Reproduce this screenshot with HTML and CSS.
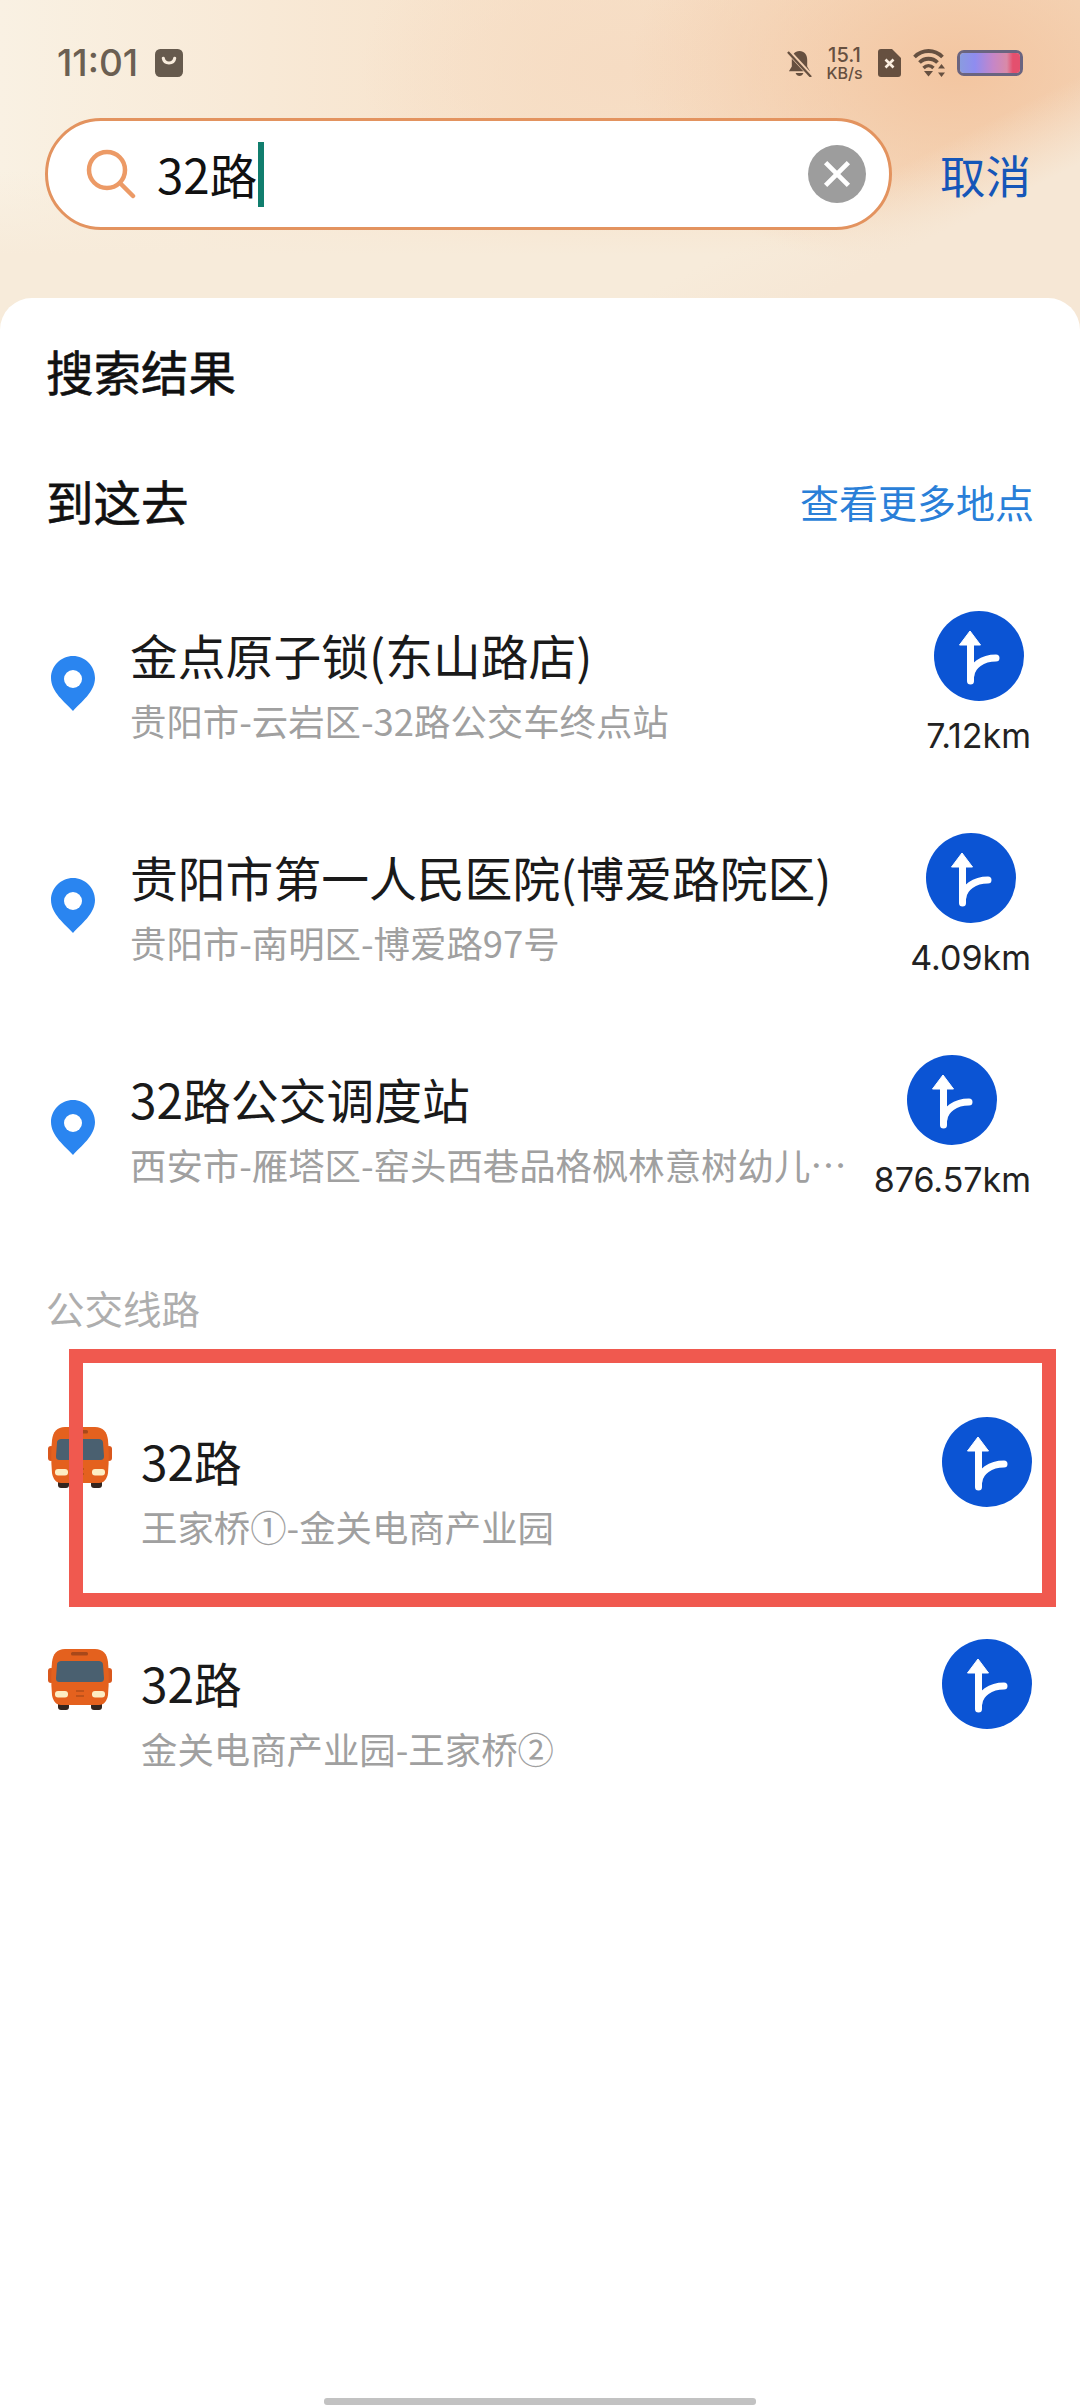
FILE: index.html
```html
<!DOCTYPE html>
<html>

<head>
    <title>搜索结果</title>
    <meta name='viewport' content='width=device-width'>
    <link rel="stylesheet" href="styles.css">
</head>

<body>
    <div class="top">
        <div class="statusbar">
            <div class="status-left">
                <span class="clock">11:01</span>
                <svg class="bag" viewBox="0 0 27 27"><rect width="27" height="27" rx="5" fill="#665a4d"/><path d="M8 9c1 6 10 6 11 0" fill="none" stroke="#f8ecdc" stroke-width="3" stroke-linecap="round"/></svg>
            </div>
            <div class="status-right">
                <svg class="bell" viewBox="0 0 26 28"><path d="M13 1c5 0 8 4 8 9v7l3 5H2l3-5v-7c0-5 3-9 8-9z" fill="#665040"/><path d="M9 24h8c-1 4-7 4-8 0z" fill="#665040"/><path d="M1 1l24 26" stroke="#f3cfb0" stroke-width="5"/><path d="M1 2l24 26" stroke="#665040" stroke-width="2.4"/></svg>
                <div class="speed"><span class="speed-num">15.1</span><span class="speed-unit">KB/s</span></div>
                <svg class="sim" viewBox="0 0 23 28"><path d="M3 0h11l9 9v16a3 3 0 0 1-3 3H3a3 3 0 0 1-3-3V3a3 3 0 0 1 3-3z" fill="#665040"/><path d="M7.500 10.500l8 8M15.500 10.500l-8 8" stroke="#fbeee0" stroke-width="2.600"/></svg>
                <svg class="wifi" viewBox="0 0 34 28"><path d="M2 8c8-8 20-8 28 0" fill="none" stroke="#665040" stroke-width="3.800"/><path d="M7 13.500c5-5 13-5 18 0" fill="none" stroke="#665040" stroke-width="3.800"/><path d="M11 19c3-3 7-3 10 0" fill="none" stroke="#665040" stroke-width="3.400"/><path d="M11.500 22h9l-4.500 5.500z" fill="#665040"/><path d="M29 15l3.500 4.500h-7zM29 28l3.500-4.500h-7z" fill="#665040"/></svg>
                <div class="battery"><div class="battery-fill"></div></div>
            </div>
        </div>
        <div class="searchrow">
            <div class="searchbox">
                <svg class="search-icon" viewBox="0 0 50 50"><circle cx="21" cy="21" r="18" fill="none" stroke="#ec9a66" stroke-width="4.500"/><path d="M34 34l13 13" stroke="#ec9a66" stroke-width="4.500" stroke-linecap="round"/></svg>
                <span class="query">32路</span><span class="caret"></span>
                <span class="clear"><svg viewBox="0 0 56 56"><path d="M17 17l22 22M39 17l-22 22" stroke="#fff" stroke-width="4.500"/></svg></span>
            </div>
            <span class="cancel">取消</span>
        </div>
    </div>

    <div class="sheet">
        <div class="sheet-title">搜索结果</div>
        <div class="section-head">
            <span class="section-title">到这去</span>
            <span class="more">查看更多地点</span>
        </div>

        <div class="row">
            <svg class="pin" viewBox="0 0 44 55"><use href="#pin-shape"/></svg>
            <div class="info">
                <div class="name">金点原子锁(东山路店)</div>
                <div class="addr">贵阳市-云岩区-32路公交车终点站</div>
            </div>
            <div class="go">
                <svg class="nav" viewBox="0 0 90 90"><use href="#nav-shape"/></svg>
                <span class="dist">7.12km</span>
            </div>
        </div>

        <div class="row">
            <svg class="pin" viewBox="0 0 44 55"><use href="#pin-shape"/></svg>
            <div class="info">
                <div class="name">贵阳市第一人民医院(博爱路院区)</div>
                <div class="addr">贵阳市-南明区-博爱路97号</div>
            </div>
            <div class="go">
                <svg class="nav" viewBox="0 0 90 90"><use href="#nav-shape"/></svg>
                <span class="dist">4.09km</span>
            </div>
        </div>

        <div class="row">
            <svg class="pin" viewBox="0 0 44 55"><use href="#pin-shape"/></svg>
            <div class="info">
                <div class="name">32路公交调度站</div>
                <div class="addr">西安市-雁塔区-窑头西巷品格枫林意树幼儿…</div>
            </div>
            <div class="go">
                <svg class="nav" viewBox="0 0 90 90"><use href="#nav-shape"/></svg>
                <span class="dist">876.57km</span>
            </div>
        </div>

        <div class="group-title">公交线路</div>

        <div class="row bus-row">
            <svg class="bus" viewBox="0 0 64 62"><use href="#bus-shape"/></svg>
            <div class="info">
                <div class="name">32路</div>
                <div class="addr">王家桥①-金关电商产业园</div>
            </div>
            <div class="go">
                <svg class="nav" viewBox="0 0 90 90"><use href="#nav-shape"/></svg>
            </div>
        </div>

        <div class="row bus-row">
            <svg class="bus" viewBox="0 0 64 62"><use href="#bus-shape"/></svg>
            <div class="info">
                <div class="name">32路</div>
                <div class="addr">金关电商产业园-王家桥②</div>
            </div>
            <div class="go">
                <svg class="nav" viewBox="0 0 90 90"><use href="#nav-shape"/></svg>
            </div>
        </div>
    </div>

    <!-- red annotation box drawn over the first bus line -->
    <div class="highlight"></div>
    <div class="home-bar"></div>

    <svg class="defs" width="0" height="0">
        <defs>
            <g id="pin-shape">
                <path d="M22 0c12 0 22 10 22 22 0 14-14 24-22 33C14 46 0 36 0 22 0 10 10 0 22 0z" fill="#2a85f0"/>
                <circle cx="22" cy="23" r="9" fill="#fff"/>
            </g>
            <g id="nav-shape">
                <circle cx="45" cy="45" r="45" fill="#0b54d4"/>
                <path d="M36.500 70V30" stroke="#fff" stroke-width="7" stroke-linecap="round"/>
                <path d="M36 20l10.500 14h-21z" fill="#fff" stroke="#fff" stroke-width="1" stroke-linejoin="round"/>
                <path d="M37 64c1-9 11-17 25-17" fill="none" stroke="#fff" stroke-width="7" stroke-linecap="round"/>
            </g>
            <g id="bus-shape">
                <rect x="10" y="52" width="11" height="9" rx="3" fill="#33251f"/>
                <rect x="43" y="52" width="11" height="9" rx="3" fill="#33251f"/>
                <rect x="0" y="19" width="6" height="15" rx="3" fill="#d9581d"/>
                <rect x="58" y="19" width="6" height="15" rx="3" fill="#d9581d"/>
                <path d="M17 0h30c8 0 12 5 13 13 1 10 1 22 0 33-1 6-4 10-9 10H13c-5 0-8-4-9-10-1-11-1-23 0-33C5 5 9 0 17 0z" fill="#e4611e"/>
                <rect x="23" y="3" width="17" height="3.500" rx="1.500" fill="#a8481a"/>
                <path d="M14 12h36c3 0 5 1 5 4l1 13c0 3-1 4-4 4H12c-3 0-4-1-4-4l1-13c0-3 2-4 5-4z" fill="#4a6070"/>
                <rect x="7" y="42" width="13" height="6.500" rx="3" fill="#fdeec4"/>
                <rect x="44" y="42" width="13" height="6.500" rx="3" fill="#fdeec4"/>
                <path d="M28 42h8M28 47h8" stroke="#b24e1a" stroke-width="1.500"/>
            </g>
        </defs>
    </svg>
</body>

</html>
```
FILE: styles.css
```css
html, body {
    margin: 0;
    padding: 0;
}

body {
    width: 1080px;
    height: 2408px;
    position: relative;
    overflow: hidden;
    font-family: "Noto Sans CJK SC", "Noto Sans", sans-serif;
    color: #111;
    background: #fff;
}

.top {
    height: 340px;
    box-sizing: border-box;
    background:
        linear-gradient(-26.6deg, #f6e7d5 0%, #f6e7d5 20%, rgba(246, 231, 213, 0) 30%),
        radial-gradient(ellipse 330px 210px at 960px 70px, #f3c5a0 0%, rgba(243, 197, 160, 0) 100%),
        radial-gradient(ellipse 260px 160px at 620px 70px, #f6dcc3 0%, rgba(246, 220, 195, 0) 100%),
        linear-gradient(180deg, rgba(247, 236, 220, 0) 50%, #f7ebda 75%),
        linear-gradient(90deg, #f9f1e3 0%, #f7e1c9 50%, #f5dcc2 100%);
}

.statusbar {
    height: 118px;
    box-sizing: border-box;
    padding: 44px 57px 0 57px;
    display: flex;
    justify-content: space-between;
    align-items: flex-start;
}

.status-left {
    display: flex;
    align-items: center;
    gap: 17px;
    height: 38px;
}

.clock {
    font-family: Inter, sans-serif;
    font-size: 37px;
    line-height: 38px;
    font-weight: 500;
    color: #6b5f52;
}

.bag {
    width: 28px;
    height: 28px;
}

.status-right {
    display: flex;
    align-items: center;
    height: 38px;
}

.bell {
    width: 25px;
    height: 27px;
    margin-right: 14px;
}

.speed {
    display: flex;
    flex-direction: column;
    align-items: center;
    width: 37px;
    margin-right: 15px;
    color: #665040;
    font-family: Inter, sans-serif;
    font-weight: 500;
}

.speed-num {
    font-size: 20px;
    line-height: 20px;
}

.speed-unit {
    font-size: 16px;
    line-height: 16px;
}

.sim {
    width: 23px;
    height: 28px;
    margin-right: 11px;
}

.wifi {
    width: 35px;
    height: 28px;
    margin-right: 10px;
}

.battery {
    width: 66px;
    height: 26px;
    box-sizing: border-box;
    border: 3px solid #6a6480;
    border-radius: 7px;
    overflow: hidden;
}

.battery-fill {
    height: 100%;
    background: linear-gradient(90deg, #8a9be0 0%, #8f8cf0 25%, #c586c8 55%, #d98aa8 78%, #e4506e 88%);
}

.searchrow {
    display: flex;
    align-items: center;
}

.searchbox {
    width: 847px;
    height: 112px;
    margin-left: 45px;
    box-sizing: border-box;
    border: 3px solid #e3935f;
    border-radius: 56px;
    background: #fff;
    display: flex;
    align-items: center;
    padding-left: 38px;
    padding-right: 23px;
}

.search-icon {
    width: 50px;
    height: 50px;
    margin-right: 21px;
}

.query {
    font-size: 47.500px;
    line-height: 64px;
    color: #111;
}

.caret {
    width: 6px;
    height: 65px;
    margin-left: 1px;
    background: #117e6e;
}

.clear {
    margin-left: auto;
    width: 58px;
    height: 58px;
    border-radius: 50%;
    background: #9d9d9d;
}

.clear svg {
    display: block;
}

.cancel {
    margin-left: 48px;
    font-size: 45.500px;
    line-height: 64px;
    color: #1556b8;
}

.sheet {
    position: absolute;
    top: 298px;
    left: 0;
    right: 0;
    bottom: 0;
    padding-top: 39px;
    background: #fff;
    border-radius: 32px 32px 0 0;
}

.sheet-title {
    padding-left: 46px;
    font-size: 47.500px;
    line-height: 68px;
    -webkit-text-stroke: 0.6px #111;
    color: #111;
}

.section-head {
    margin-top: 62px;
    margin-bottom: 55px;
    padding: 0 46px;
    display: flex;
    justify-content: space-between;
    align-items: center;
}

.section-title {
    font-size: 47.500px;
    line-height: 68px;
    -webkit-text-stroke: 0.6px #111;
    color: #111;
}

.more {
    font-size: 39px;
    line-height: 68px;
    color: #2a7fd8;
}

.row {
    height: 222px;
    box-sizing: border-box;
    padding: 0 49px 0 51px;
    display: flex;
    align-items: flex-start;
}

.pin {
    flex: none;
    width: 44px;
    height: 55px;
    margin-top: 66px;
    margin-right: 35px;
}

.info {
    flex: 1;
    min-width: 0;
    padding-top: 32px;
}

.name {
    font-size: 47.800px;
    line-height: 66px;
    color: #1a1a1a;
    white-space: nowrap;
}

.addr {
    font-size: 36.400px;
    line-height: 65px;
    color: #a0a0a0;
    white-space: nowrap;
}

.go {
    flex: none;
    margin-left: 28px;
    padding-top: 21px;
    display: flex;
    flex-direction: column;
    align-items: center;
}

.nav {
    width: 90px;
    height: 90px;
}

.dist {
    margin-top: 13px;
    font-family: Inter, sans-serif;
    font-size: 34px;
    line-height: 44px;
    color: #222;
}

.group-title {
    margin-top: 26px;
    margin-bottom: 64px;
    padding-left: 46px;
    font-size: 38.500px;
    line-height: 50px;
    color: #aeaeae;
}

.bus-row {
    padding-left: 48px;
    padding-right: 48px;
}

.bus {
    flex: none;
    width: 64px;
    height: 62px;
    margin-top: 31px;
    margin-right: 29px;
}

.highlight {
    position: absolute;
    left: 69px;
    top: 1349px;
    width: 987px;
    height: 258px;
    box-sizing: border-box;
    border: 14px solid #f0594f;
}

.home-bar {
    position: absolute;
    left: 324px;
    top: 2398px;
    width: 432px;
    height: 7px;
    border-radius: 3px;
    background: #c2c2c2;
}

.defs {
    position: absolute;
}
```
